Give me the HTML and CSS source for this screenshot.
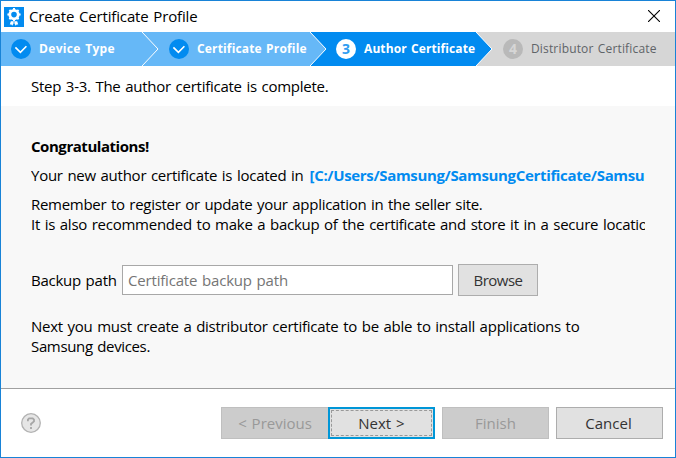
FILE: index.html
```html
<!DOCTYPE html>
<html lang="en">
<head>
<meta charset="utf-8">
<title>Create Certificate Profile</title>
<link rel="stylesheet" href="styles.css">
</head>
<body>
<main class="dialog">
  <header class="titlebar">
    <svg class="app-icon" width="20" height="20" viewBox="0 0 20 20">
      <rect width="20" height="20" fill="#028bf0"/>
      <circle cx="10" cy="7.6" r="4.2" fill="none" stroke="#fff" stroke-width="2.8"/>
      <path d="M10 1v2M10 12.2v2M3.4 7.6h2M14.6 7.6h2M5.4 3l1.4 1.4M14.6 3l-1.4 1.4M5.4 12.2l1.4-1.4M14.6 12.2l-1.4-1.4" stroke="#fff" stroke-width="2"/>
      <path d="M6.8 14.2h2.8v2.2L8.2 18.8l-.8-1.4-1.6.2zM13.2 14.2h-2.8v2.2l1.4 2.4.8-1.4 1.6.2z" fill="#fff"/>
    </svg>
    <h1 class="title">Create Certificate Profile</h1>
    <svg class="close" width="12" height="12" viewBox="0 0 12 12"><path d="M0 0L12 12M12 0L0 12" stroke="#000" stroke-width="1.1"/></svg>
  </header>

  <ol class="steps">
    <li class="step done first">
      <svg class="mark" width="20" height="20" viewBox="0 0 20 20"><circle cx="10" cy="10" r="10" fill="#028bf0"/><path d="M4.4 8.4l5 5 6-6.2" fill="none" stroke="#fff" stroke-width="1.6"/></svg>
      <span class="label device">Device Type</span>
      <svg class="arrow" width="17" height="34" viewBox="0 0 17 34"><path d="M0 0L16 17L0 34z" fill="#66b8f7"/><path d="M0 0L16 17L0 34" fill="none" stroke="#fff"/></svg>
    </li>
    <li class="step done second">
      <svg class="mark" width="20" height="20" viewBox="0 0 20 20"><circle cx="10" cy="10" r="10" fill="#028bf0"/><path d="M4.4 8.4l5 5 6-6.2" fill="none" stroke="#fff" stroke-width="1.6"/></svg>
      <span class="label">Certificate Profile</span>
      <svg class="arrow" width="17" height="34" viewBox="0 0 17 34"><path d="M0 0L16 17L0 34z" fill="#66b8f7"/><path d="M0 0L16 17L0 34" fill="none" stroke="#fff"/></svg>
    </li>
    <li class="step current">
      <span class="mark number">3</span>
      <span class="label author">Author Certificate</span>
      <svg class="arrow" width="17" height="34" viewBox="0 0 17 34"><path d="M0 0L16 17L0 34z" fill="#028bf0"/><path d="M0 0L16 17L0 34" fill="none" stroke="#fff"/></svg>
    </li>
    <li class="step pending">
      <span class="mark number">4</span>
      <span class="label">Distributor Certificate</span>
    </li>
  </ol>

  <p class="subtitle">Step 3-3. The author certificate is complete.</p>

  <section class="content">
    <p class="line heading">Congratulations!</p>
    <p class="line location"><span>Your new author certificate is located in</span><strong class="path">[C:/Users/Samsung/SamsungCertificate/Samsung]</strong></p>
    <p class="line remember">Remember to register or update your application in the seller site.</p>
    <p class="line">It is also recommended to make a backup of the certificate and store it in a secure location.</p>
    <div class="backup">
      <label class="backup-label" for="backup">Backup path</label>
      <input class="field" id="backup" type="text" placeholder="Certificate backup path">
      <button class="button browse">Browse</button>
    </div>
    <p class="line">Next you must create a distributor certificate to be able to install applications to</p>
    <p class="line devices">Samsung devices.</p>
  </section>

  <footer class="footer">
    <svg class="help" width="20" height="20" viewBox="0 0 20 20"><circle cx="10" cy="10" r="9.3" fill="#e6e6e6" stroke="#b2b2b2" stroke-width="1.3"/><path d="M6.9 8.2V6.6L8.1 5.4h3.6l1.3 1.3v1.6L10 11v1.6M10 14v2" fill="none" stroke="#a6a6a6" stroke-width="1.8"/></svg>
    <button class="button previous" disabled>&lt; Previous</button>
    <button class="button next">Next &gt;</button>
    <button class="button finish" disabled>Finish</button>
    <button class="button cancel">Cancel</button>
  </footer>
</main>
</body>
</html>
```
FILE: styles.css
```css
* { box-sizing: border-box; }
body { margin: 0; font: 15px/20px "Open Sans", "Noto Sans", sans-serif; color: #000; word-spacing: 1px; letter-spacing: -0.25px; }
p, h1, ol { margin: 0; padding: 0; font-size: inherit; font-weight: 400; }
.dialog { width: 676px; height: 458px; display: flex; flex-direction: column; border: 1px solid #1883d7; background: #fff; overflow: hidden; }

.titlebar { height: 31px; display: flex; align-items: center; padding: 0 15px 0 3px; }
.title { margin: 0 0 2px 5px; flex: 1; letter-spacing: -0.15px; }
.close { margin-bottom: 1px; }

.steps { display: flex; height: 34px; list-style: none; font-size: 12px; }
.step { position: relative; display: flex; align-items: center; gap: 8px; padding-left: 27px; font-weight: 700; color: #fff; white-space: nowrap; letter-spacing: 0.16px; }
.step .mark { flex: none; }
.first { width: 141px; padding-left: 10px; }
.second { width: 168px; }
.done { background: #66b8f7; }
.current { width: 166px; padding-left: 26px; background: #028bf0; }
.pending { flex: 1; background: #d6d6d6; color: #5f6468; font-weight: 400; }
.device { letter-spacing: 0.33px; }
.author { letter-spacing: 0.1px; }
.arrow { position: absolute; left: 100%; top: 0; z-index: 1; }
.number { width: 20px; height: 20px; border-radius: 50%; background: #fff; color: #2e9cf1; font-size: 14px; font-weight: 700; line-height: 20px; text-align: center; letter-spacing: 0; }
.pending .number { background: #b9b9b9; color: #d6d6d6; }

.subtitle { height: 40px; padding: 10px 30px; }
.content { height: 282px; padding: 30px 30px 0; background: #f8f8f8; }
.line { height: 20px; white-space: nowrap; overflow: hidden; }
.heading { font-weight: 700; letter-spacing: -0.45px; }
.location { display: flex; gap: 6px; margin-top: 9px; }
.path { color: #028bf0; letter-spacing: -0.34px; }
.remember { margin-top: 9px; letter-spacing: -0.285px; }
.backup { display: flex; align-items: center; height: 32px; margin: 30px 0 20px; }
.backup-label { width: 91px; letter-spacing: -0.25px; }
.field { width: 331px; height: 30px; margin-right: 5px; padding: 0 5px; border: 1px solid #a8a8a8; background: #fff; font: inherit; letter-spacing: -0.18px; word-spacing: inherit; outline: 0; }
.field::placeholder { color: #757575; opacity: 1; }
.devices { letter-spacing: -0.35px; }

.button { height: 32px; padding: 0; border: 1px solid #adadad; background: #e1e1e1; color: #333; font: inherit; letter-spacing: 0; word-spacing: inherit; }
.button:disabled { background: #ccc; border-color: #bfbfbf; color: #999; }
.browse { width: 80px; letter-spacing: -0.5px; }
.footer { flex: 1; display: flex; align-items: center; padding: 0 12px 0 20px; border-top: 1px solid #a0a0a0; }
.help { margin-right: auto; }
.previous, .next, .finish, .cancel { width: 107px; }
.previous { border-right: 0; }
.next { border: 2px solid #0096d7; outline: 1px dashed #999; outline-offset: -4px; }
.finish, .cancel { margin-left: 7px; }
.cancel { padding-right: 2px; }
```
